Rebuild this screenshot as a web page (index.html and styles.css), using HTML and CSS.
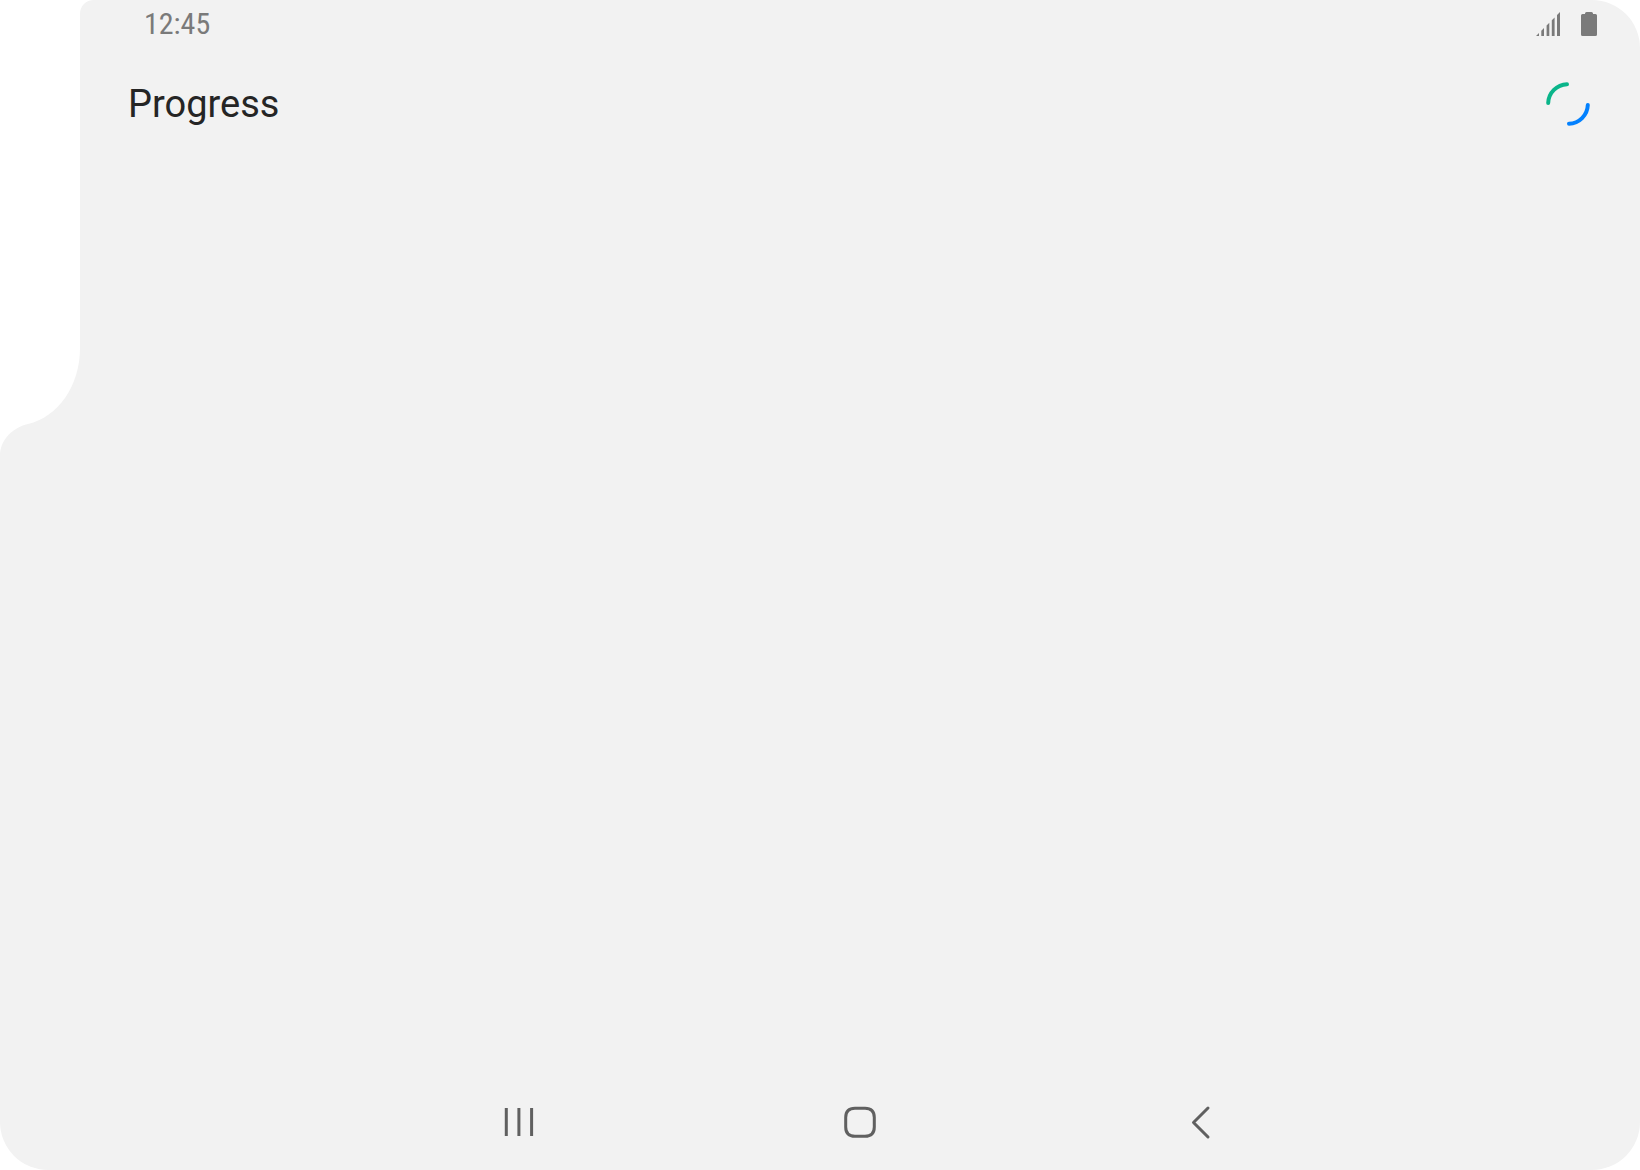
FILE: index.html
```html
<!DOCTYPE html>
<html lang="en">
<head>
  <meta charset="utf-8">
  <meta name="viewport" content="width=device-width, initial-scale=1">
  <title>Progress</title>
  <link rel="stylesheet" href="styles.css">
</head>
<body>
  <div class="screen">
    <svg class="cutout" viewBox="0 0 96 460" aria-hidden="true">
      <path d="M0 0H94C86 0 80 6 80 14V348C80 386 58 417 28 424C12 428 0 440 0 456Z"/>
    </svg>

    <div class="status-bar">
      <time class="clock">12:45</time>
      <div class="status-icons">
        <svg class="status-icon" viewBox="0 0 24 24" role="img" aria-label="Signal">
          <path d="M0 24L3 21V24ZM5.300 24V18.700L8 16V24ZM10.600 24V13.400L13.300 10.700V24ZM15.800 24V8.200L18.600 5.400V24ZM21 24V3L24 0V24Z"/>
        </svg>
        <svg class="status-icon" viewBox="0 0 24 24" role="img" aria-label="Battery">
          <path d="M6.500 2H9V1.500A1.500 1.500 0 0 1 10.500 0H15.500A1.500 1.500 0 0 1 17 1.500V2H19.500A1.500 1.500 0 0 1 21 3.500V22.500A1.500 1.500 0 0 1 19.500 24H6.500A1.500 1.500 0 0 1 5 22.500V3.500A1.500 1.500 0 0 1 6.500 2Z"/>
        </svg>
      </div>
    </div>

    <header class="app-bar">
      <h1 class="title">Progress</h1>
      <svg class="spinner" viewBox="0 0 48 48" role="img" aria-label="Loading">
        <path class="arc-green" d="M4.200 23A19.500 19.500 0 0 1 23 4.200"/>
        <path class="arc-blue" d="M43.800 25A19.500 19.500 0 0 1 25 43.800"/>
      </svg>
    </header>

    <main class="content"></main>

    <nav class="nav-bar" aria-label="System navigation">
      <button class="nav-button" type="button" aria-label="Recent apps">
        <svg class="nav-icon" viewBox="0 0 40 40"><path d="M7.300 6V34M19.900 6V34M32.600 6V34" stroke-linecap="butt"/></svg>
      </button>
      <button class="nav-button" type="button" aria-label="Home">
        <svg class="nav-icon" viewBox="0 0 40 40"><path d="M15 6.200H25C31 6.200 34.300 9.500 34.300 15.500V25C34.300 31 31 34.300 25 34.300H15C9 34.300 5.700 31 5.700 25V15.500C5.700 9.500 9 6.200 15 6.200Z"/></svg>
      </button>
      <button class="nav-button" type="button" aria-label="Back">
        <svg class="nav-icon" viewBox="0 0 40 40"><path d="M27 6L12.500 20.500L27 35"/></svg>
      </button>
    </nav>
  </div>
</body>
</html>
```

FILE: styles.css
```css
* {
  box-sizing: border-box;
}

body {
  margin: 0;
  background: #ffffff;
  font-family: Roboto, "Liberation Sans", sans-serif;
}

.screen {
  position: relative;
  display: flex;
  flex-direction: column;
  min-height: 100vh;
  padding-left: 80px;
  background: #f2f2f2;
  border-radius: 48px;
}

.cutout {
  position: absolute;
  top: 0;
  left: 0;
  width: 96px;
  height: 460px;
  fill: #ffffff;
}

.status-bar {
  display: flex;
  align-items: center;
  justify-content: space-between;
  height: 48px;
  padding: 0 40px 0 64px;
}

.clock {
  font-family: "Roboto Condensed", Roboto, sans-serif;
  font-size: 30px;
  line-height: 48px;
  color: #7a7a7a;
}

.status-icons {
  display: flex;
  gap: 16px;
}

.status-icon {
  width: 24px;
  height: 24px;
  fill: #7a7a7a;
}

.app-bar {
  display: flex;
  align-items: center;
  justify-content: space-between;
  height: 112px;
  padding: 0 48px;
}

.title {
  margin: 0;
  font-size: 38px;
  font-weight: 400;
  line-height: 48px;
  color: #252525;
}

.spinner {
  width: 48px;
  height: 48px;
  fill: none;
  stroke-width: 4;
  stroke-linecap: round;
}

.arc-green {
  stroke: #0ab58a;
}

.arc-blue {
  stroke: #0381fe;
}

.content {
  flex: 1;
}

.nav-bar {
  display: flex;
  width: 100%;
  max-width: 1024px;
  height: 96px;
  margin: 0 auto;
}

.nav-button {
  display: flex;
  flex: 1;
  align-items: center;
  justify-content: center;
  padding: 0;
  border: 0;
  background: none;
}

.nav-icon {
  width: 40px;
  height: 40px;
  fill: none;
  stroke: #606060;
  stroke-width: 3;
  stroke-linecap: round;
  stroke-linejoin: round;
}
```
